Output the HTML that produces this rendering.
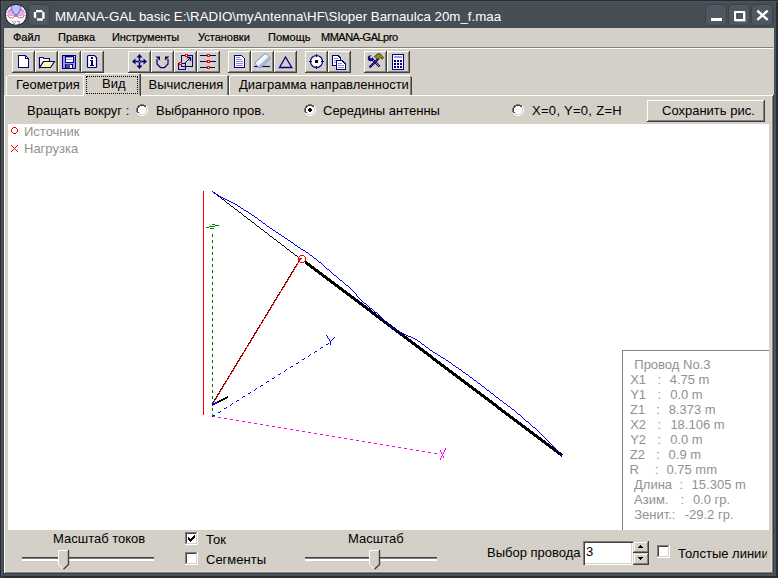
<!DOCTYPE html>
<html><head><meta charset="utf-8">
<style>
*{margin:0;padding:0;box-sizing:border-box}
html,body{width:778px;height:578px;overflow:hidden;background:#464e56}
body{position:relative;font-family:"Liberation Sans",sans-serif;font-size:13px;color:#000}
.a{position:absolute}
.t{position:absolute;white-space:pre;line-height:13px;font-size:13px}
.m{position:absolute;white-space:pre;line-height:11px;font-size:11px;top:32px;-webkit-text-stroke:0.2px #000}
.btn{position:absolute;width:23px;height:22px;background:#d4d0c8;box-shadow:inset -1px -1px #404040,inset 1px 1px #fff,inset -2px -2px #808080}
.btn svg{position:absolute;left:0;top:0}
.tb{position:absolute;width:22px;height:22px;border-radius:4px;background:#4f5860;border:1px solid #3a4147}
.radio{position:absolute;width:12px;height:12px}
.cb{position:absolute;width:13px;height:13px;background:#fff;box-shadow:inset 1px 1px #808080,inset 2px 2px #404040,inset -1px -1px #fff,inset -2px -2px #d4d0c8}
.it{position:absolute;white-space:pre;line-height:13px;font-size:13px;color:#919191}
</style></head><body>
<!-- frame -->
<div class="a" style="left:0;top:0;width:778px;height:1px;background:#262b30"></div>
<div class="a" style="left:0;top:1px;width:778px;height:1px;background:#4c545c"></div>
<div class="a" style="left:0;top:0;width:1px;height:578px;background:#262b30"></div>
<div class="a" style="left:1px;top:2px;width:2px;height:576px;background:#4b545c"></div>
<div class="a" style="left:3px;top:28px;width:1px;height:550px;background:#3a4147"></div>

<!-- title bar -->
<svg class="a" style="left:4px;top:2px" width="26" height="26" viewBox="0 0 26 26">
  <circle cx="12" cy="12.8" r="10.6" fill="#fff"/>
  <path d="M3.4 13.4 Q3.6 7.2 8.2 6.6 Q10.6 10.2 12 13.2 Z" fill="#f4a4f0"/>
  <path d="M20.6 13.4 Q20.4 7.2 15.8 6.6 Q13.4 10.2 12 13.2 Z" fill="#f4a4f0"/>
  <path d="M3.6 10.5 Q5 7.2 8.2 6.6 M20.4 10.5 Q19 7.2 15.8 6.6" fill="none" stroke="#d84868" stroke-width="0.7"/>
  <path d="M7 3.6 Q12 0.8 17 3.6 Q17.6 8.6 12 13.4 Q6.4 8.6 7 3.6 Z" fill="#b8b8ff" stroke="#4848b8" stroke-width="0.8"/>
  <line x1="12" y1="2.5" x2="12" y2="13" stroke="#d8d8f0" stroke-width="0.6"/>
  <path d="M3.6 13.6 Q5.4 17 8.8 15.8 L12 13.4 L15.2 15.8 Q18.6 17 20.4 13.6" fill="none" stroke="#d83850" stroke-width="0.9"/>
  <line x1="1" y1="13.4" x2="23" y2="13.4" stroke="#a8a8a8" stroke-width="0.7"/>
  <path d="M5 17.8 Q12 21.4 19 17.8 M8 15.5 Q12 23 16 15.5" fill="none" stroke="#dcdcdc" stroke-width="0.6"/>
  <circle cx="12" cy="13.4" r="1.3" fill="#7070d0"/>
  <text x="12.2" y="22.6" font-family="Liberation Sans" font-size="5.8" fill="#5050a8" text-anchor="middle">V.3</text>
  <circle cx="12" cy="12.8" r="13" fill="none" stroke="#464e56" stroke-width="4.4"/>
  <circle cx="12" cy="12.8" r="10.6" fill="none" stroke="#1e1e1e" stroke-width="1"/>
</svg>
<div class="tb" style="left:28px;top:4px"></div>
<svg class="a" style="left:29px;top:5px" width="20" height="20" viewBox="0 0 20 20">
  <path fill="#fff" d="M7 5 H13 L13.8 7.3 H7 Z M13.2 6.6 L15.6 7.3 V13.8 H13.2 Z M7.8 13.3 H13.8 V15.7 H8.2 Z M4.8 7 H7.2 V13 L5.6 13 L4.8 12.2 Z"/>
</svg>
<div class="a" style="left:55px;top:10px;white-space:pre;font-size:13.33px;line-height:14px;color:#fff">MMANA-GAL basic E:\RADIO\myAntenna\HF\Sloper Barnaulca 20m_f.maa</div>
<div class="tb" style="left:705px;top:4px"></div>
<div class="tb" style="left:728px;top:4px"></div>
<div class="tb" style="left:751px;top:4px"></div>
<div class="a" style="left:711px;top:18px;width:11px;height:3px;background:#fff"></div>
<div class="a" style="left:734px;top:11px;width:11px;height:10px;border:2px solid #fff;border-top-width:2px;box-shadow:1px 1px 0 rgba(255,255,255,0.35)"></div>
<svg class="a" style="left:752px;top:5px" width="20" height="20" viewBox="0 0 20 20">
  <path d="M5.3 5.6 L15.7 14.9 M15.7 5.6 L5.3 14.9" stroke="#fff" stroke-width="2.5"/>
</svg>

<!-- client area -->
<div class="a" style="left:4px;top:28px;width:770px;height:545px;background:#d4d0c8"></div>
<div class="a" style="left:771px;top:96px;width:1px;height:476px;background:#dedad3"></div>
<div class="a" style="left:5px;top:571px;width:767px;height:1px;background:#dedad3"></div>
<div class="a" style="left:772px;top:96px;width:1px;height:477px;background:#808080"></div>
<div class="a" style="left:5px;top:572px;width:768px;height:1px;background:#808080"></div>
<div class="a" style="left:773px;top:95px;width:1px;height:479px;background:#404040"></div>
<div class="a" style="left:4px;top:573px;width:770px;height:1px;background:#404040"></div>
<div class="a" style="left:776px;top:2px;width:2px;height:576px;background:#2a2f33"></div>
<div class="a" style="left:2px;top:576px;width:776px;height:2px;background:#2a2f33"></div>
<div class="a" style="left:774px;top:28px;width:2px;height:548px;background:#4a535b"></div>
<div class="a" style="left:4px;top:574px;width:772px;height:2px;background:#4a535b"></div>

<!-- menu -->
<div class="m" style="left:13px;top:32px">Файл</div>
<div class="m" style="left:58px;top:32px">Правка</div>
<div class="m" style="left:112px;top:32px;letter-spacing:-0.15px">Инструменты</div>
<div class="m" style="left:198px;top:32px">Установки</div>
<div class="m" style="left:268px;top:32px">Помощь</div>
<div class="m" style="left:321px;top:32px;letter-spacing:-0.5px">MMANA-GALpro</div>
<div class="a" style="left:4px;top:47px;width:769px;height:1px;background:#808080"></div>
<div class="a" style="left:4px;top:48px;width:769px;height:1px;background:#fff"></div>

<!-- TOOLBAR -->
<div class="btn" style="left:12px;top:51px"><svg width="23" height="22" shape-rendering="crispEdges">
 <path d="M6.5 4.5 H13.5 L16.5 7.5 V16.5 H6.5 Z" fill="#fff" stroke="#000080"/>
 <path d="M13.5 4.5 V7.5 H16.5" fill="none" stroke="#000080"/>
</svg></div>
<div class="btn" style="left:35px;top:51px"><svg width="23" height="22">
 <path d="M4.5 6.5 V16.5 H15.5 L19.5 10.5 H8.5 L4.5 16.5" fill="#ffff99" stroke="#000080" stroke-width="1.1"/>
 <path d="M4.5 6.5 H8 L9 7.5 H14.5 V10.5 H8.5 L4.5 16.5 Z" fill="#ffffcc" stroke="#000080" stroke-width="1.1"/>
</svg></div>
<div class="btn" style="left:58px;top:51px"><svg width="23" height="22" shape-rendering="crispEdges">
 <rect x="4.5" y="4.5" width="13" height="13" fill="#9a9aee" stroke="#000080"/>
 <rect x="7" y="5" width="8" height="6" fill="#fff" stroke="#000080" stroke-width="1"/>
 <rect x="8" y="6" width="6" height="1" fill="#9a9aee"/>
 <rect x="8" y="8" width="6" height="1" fill="#9a9aee"/>
 <rect x="7" y="13" width="8" height="5" fill="#000080"/>
 <rect x="8" y="13" width="5" height="4" fill="#4040b0"/>
 <rect x="12" y="14" width="2" height="3" fill="#ffffcc"/>
 <rect x="16" y="5" width="1" height="1" fill="#fff"/>
</svg></div>
<div class="btn" style="left:81px;top:51px"><svg width="23" height="22">
 <path d="M6.5 5.5 Q6.5 4.5 7.5 4.5 H13.5 L15.5 6.5 V16 Q15.5 16.5 14.5 16.5 H7.5 Q6.5 16.5 6.5 15.5 Z" fill="#fff" stroke="#000080" stroke-width="1.2"/>
 <g fill="#000080" shape-rendering="crispEdges"><rect x="10" y="6" width="2" height="2"/><rect x="9" y="9" width="3" height="1"/><rect x="10" y="9" width="2" height="5"/><rect x="9" y="14" width="4" height="1"/></g>
</svg></div>

<div class="btn" style="left:128px;top:51px"><svg width="23" height="22">
 <path d="M11.5 6 V15 M6.5 10.5 H16.5" stroke="#000080" stroke-width="1.5"/>
 <path d="M11.5 3 L8.5 6.5 H14.5 Z M11.5 18 L8.5 14.5 H14.5 Z M4 10.5 L7.5 7.5 V13.5 Z M19 10.5 L15.5 7.5 V13.5 Z" fill="#000080"/>
 <rect x="11" y="10" width="1" height="1" fill="#b0b0c8"/>
</svg></div>
<div class="btn" style="left:151px;top:51px"><svg width="23" height="22">
 <path d="M6 8 V13 L9.5 16.5 H13.5 L17 13 V8" fill="none" stroke="#000080" stroke-width="1.25"/>
 <path d="M4.5 5.5 H9 V9.5 Z M18.5 5.5 H14 V9.5 Z" fill="#000080"/>
</svg></div>
<div class="btn" style="left:174px;top:51px"><svg width="23" height="22" shape-rendering="crispEdges">
 <rect x="7.5" y="4.5" width="11" height="11" fill="none" stroke="#000080"/>
 <rect x="4.5" y="12.5" width="7" height="6" fill="none" stroke="#000080"/>
 <path d="M10 13 L16 7" stroke="#000080" stroke-width="1" shape-rendering="auto"/>
 <path d="M16.5 6.5 H13 M16.5 6.5 V10" stroke="#000080" stroke-width="1.4" shape-rendering="auto"/>
 <rect x="11" y="3" width="3" height="3" fill="#f00"/><rect x="12" y="4" width="1" height="1" fill="#fff"/>
 <rect x="5" y="11" width="3" height="3" fill="#f00"/><rect x="6" y="12" width="1" height="1" fill="#fff"/>
</svg></div>
<div class="btn" style="left:197px;top:51px"><svg width="23" height="22" shape-rendering="crispEdges">
 <path d="M3 4.5 H19 M3 10.5 H19 M3 16.5 H18" stroke="#000080" stroke-width="1"/>
 <rect x="10" y="3" width="3" height="3" fill="#f00"/><rect x="11" y="4" width="1" height="1" fill="#fff"/>
 <rect x="10" y="9" width="3" height="3" fill="#f00"/><rect x="11" y="10" width="1" height="1" fill="#fff"/>
 <rect x="10" y="15" width="3" height="3" fill="#f00"/><rect x="11" y="16" width="1" height="1" fill="#fff"/>
</svg></div>

<div class="btn" style="left:228px;top:51px"><svg width="23" height="22" shape-rendering="crispEdges">
 <path d="M6.5 4.5 H13.5 L16.5 7.5 V16.5 H6.5 Z" fill="#fff" stroke="#000080" stroke-width="1.2"/>
 <path d="M8 6.5 H12 M8 8.5 H14 M8 10.5 H15 M8 12.5 H15 M8 14.5 H15" stroke="#8a8ad0"/>
</svg></div>
<div class="btn" style="left:251px;top:51px"><svg width="23" height="22">
 <path d="M3 15.5 H19" stroke="#000080" stroke-width="1.2"/>
 <g transform="rotate(-42 11.5 9.5)">
  <rect x="4" y="6" width="15" height="7.5" rx="2.2" fill="#f2f5fb" stroke="#7088c0" stroke-width="0.9"/>
  <rect x="4.6" y="10.8" width="13.8" height="2.4" rx="1" fill="#a8b8d8"/>
 </g>
</svg></div>
<div class="btn" style="left:274px;top:51px"><svg width="23" height="22">
 <path d="M11.5 6 L5.5 16.5 H17.8 Z" fill="none" stroke="#000080" stroke-width="1.3"/>
</svg></div>

<div class="btn" style="left:305px;top:51px"><svg width="23" height="22">
 <circle cx="11.5" cy="10.5" r="6" fill="#fff" stroke="#000080" stroke-width="1.2"/>
 <path d="M11.5 3 V6 M11.5 15 V18 M4 10.5 H7 M16 10.5 H19" stroke="#000080" stroke-width="1.2"/>
 <rect x="10" y="9" width="3" height="3" fill="#000"/>
</svg></div>
<div class="btn" style="left:328px;top:51px"><svg width="23" height="22" shape-rendering="crispEdges">
 <path d="M4.5 4.5 H10 L12.5 7 V14.5 H4.5 Z" fill="#fff" stroke="#000080" stroke-width="1.2"/>
 <path d="M6 7.5 H10 M6 9.5 H10 M6 11.5 H8" stroke="#8a8ad0"/>
 <path d="M8.5 9.5 H14 L17.5 13 V18.5 H8.5 Z" fill="#fff" stroke="#000080" stroke-width="1.2"/>
 <path d="M10 12.5 H14 M10 14.5 H16 M10 16.5 H16" stroke="#8a8ad0"/>
</svg></div>

<div class="btn" style="left:364px;top:51px"><svg width="23" height="22">
 <path d="M8 8 L15.5 15.5" stroke="#000080" stroke-width="2.4"/>
 <path d="M8.5 8.5 L15 15" stroke="#b8c0e8" stroke-width="0.8"/>
 <path d="M3.8 6.5 Q3.5 10 6.8 10.2 Q9.8 9.6 9 6 L7.2 7.8 L5.7 6.3 L7.5 4.3 Q4.3 4 3.8 6.5 Z" fill="#000080"/>
 <path d="M5.5 16.5 L14.5 7.5" stroke="#000080" stroke-width="2.4"/>
 <path d="M5.8 16.2 L14.2 7.8" stroke="#a02828" stroke-width="0.9"/>
 <path d="M10.5 5.5 L13.5 2.8 L16.2 2.8 L19.6 6.4 L18.4 8.2 L16 6.6 L14 8.6 Z" fill="#8a8a20" stroke="#202010" stroke-width="0.7"/>
</svg></div>
<div class="btn" style="left:387px;top:51px"><svg width="23" height="22" shape-rendering="crispEdges">
 <rect x="5.5" y="3.5" width="11" height="15" rx="1.5" fill="#fff" stroke="#000080" stroke-width="1.2"/>
 <rect x="7" y="5" width="8" height="2" fill="#9a9ae0"/>
 <path d="M7 9h2v2h-2zM10 9h2v2h-2zM13 9h2v2h-2zM7 12h2v2h-2zM10 12h2v2h-2zM13 12h2v2h-2zM7 15h2v2h-2zM10 15h2v2h-2zM13 15h2v2h-2z" fill="#000080"/>
</svg></div>

<!-- TABS -->
<div class="a" style="left:4px;top:95px;width:769px;height:1px;background:#fff"></div>
<div class="a" style="left:4px;top:95px;width:1px;height:478px;background:#fff"></div>
<!-- tab1 -->
<div class="a" style="left:6px;top:77px;width:1px;height:18px;background:#fff"></div>
<div class="a" style="left:7px;top:76px;width:1px;height:1px;background:#fff"></div>
<div class="a" style="left:8px;top:75px;width:76px;height:1px;background:#fff"></div>
<div class="t" style="left:16px;top:78px">Геометрия</div>
<!-- tab3 -->
<div class="a" style="left:141px;top:75px;width:86px;height:1px;background:#fff"></div>
<div class="a" style="left:227px;top:76px;width:1px;height:19px;background:#808080"></div>
<div class="a" style="left:228px;top:76px;width:1px;height:19px;background:#404040"></div>
<div class="t" style="left:148.5px;top:78px">Вычисления</div>
<!-- tab4 -->
<div class="a" style="left:229px;top:77px;width:1px;height:18px;background:#fff"></div>
<div class="a" style="left:230px;top:76px;width:1px;height:1px;background:#fff"></div>
<div class="a" style="left:231px;top:75px;width:179px;height:1px;background:#fff"></div>
<div class="a" style="left:410px;top:76px;width:1px;height:19px;background:#808080"></div>
<div class="a" style="left:411px;top:77px;width:1px;height:18px;background:#404040"></div>
<div class="t" style="left:239px;top:78px">Диаграмма направленности</div>
<!-- tab2 selected -->
<div class="a" style="left:84px;top:74px;width:56px;height:22px;background:#d4d0c8"></div>
<div class="a" style="left:83px;top:75px;width:1px;height:21px;background:#fff"></div>
<div class="a" style="left:84px;top:74px;width:1px;height:1px;background:#fff"></div>
<div class="a" style="left:85px;top:73px;width:54px;height:1px;background:#fff"></div>
<div class="a" style="left:139px;top:74px;width:1px;height:21px;background:#808080"></div>
<div class="a" style="left:140px;top:74px;width:1px;height:22px;background:#404040"></div>
<div class="a" style="left:86px;top:76px;width:52px;height:18px;outline:1px dotted #000;outline-offset:-1px"></div>
<div class="t" style="left:102px;top:77px">Вид</div>


<!-- PAGE -->
<div class="t" style="left:27px;top:104px">Вращать вокруг :</div>
<svg class="radio" style="left:136px;top:104px" width="12" height="12"><path fill="#808080" d="M4 0h1v1h-1zM5 0h1v1h-1zM6 0h1v1h-1zM7 0h1v1h-1zM2 1h1v1h-1zM3 1h1v1h-1zM8 1h1v1h-1zM9 1h1v1h-1zM1 2h1v1h-1zM1 3h1v1h-1zM0 4h1v1h-1zM0 5h1v1h-1zM0 6h1v1h-1zM0 7h1v1h-1zM1 8h1v1h-1z"/><path fill="#404040" d="M4 1h1v1h-1zM5 1h1v1h-1zM6 1h1v1h-1zM7 1h1v1h-1zM2 2h1v1h-1zM3 2h1v1h-1zM8 2h1v1h-1zM9 2h1v1h-1zM2 3h1v1h-1zM1 4h1v1h-1zM1 5h1v1h-1zM1 6h1v1h-1zM1 7h1v1h-1zM2 8h1v1h-1z"/><path fill="#ffffff" d="M4 2h1v1h-1zM5 2h1v1h-1zM6 2h1v1h-1zM7 2h1v1h-1zM10 2h1v1h-1zM3 3h1v1h-1zM4 3h1v1h-1zM5 3h1v1h-1zM6 3h1v1h-1zM7 3h1v1h-1zM8 3h1v1h-1zM10 3h1v1h-1zM2 4h1v1h-1zM3 4h1v1h-1zM4 4h1v1h-1zM5 4h1v1h-1zM6 4h1v1h-1zM7 4h1v1h-1zM8 4h1v1h-1zM9 4h1v1h-1zM11 4h1v1h-1zM2 5h1v1h-1zM3 5h1v1h-1zM4 5h1v1h-1zM5 5h1v1h-1zM6 5h1v1h-1zM7 5h1v1h-1zM8 5h1v1h-1zM9 5h1v1h-1zM11 5h1v1h-1zM2 6h1v1h-1zM3 6h1v1h-1zM4 6h1v1h-1zM5 6h1v1h-1zM6 6h1v1h-1zM7 6h1v1h-1zM8 6h1v1h-1zM9 6h1v1h-1zM11 6h1v1h-1zM2 7h1v1h-1zM3 7h1v1h-1zM4 7h1v1h-1zM5 7h1v1h-1zM6 7h1v1h-1zM7 7h1v1h-1zM8 7h1v1h-1zM9 7h1v1h-1zM11 7h1v1h-1zM3 8h1v1h-1zM4 8h1v1h-1zM5 8h1v1h-1zM6 8h1v1h-1zM7 8h1v1h-1zM8 8h1v1h-1zM10 8h1v1h-1zM1 9h1v1h-1zM4 9h1v1h-1zM5 9h1v1h-1zM6 9h1v1h-1zM7 9h1v1h-1zM10 9h1v1h-1zM2 10h1v1h-1zM3 10h1v1h-1zM8 10h1v1h-1zM9 10h1v1h-1zM4 11h1v1h-1zM5 11h1v1h-1zM6 11h1v1h-1zM7 11h1v1h-1z"/><path fill="#d4d0c8" d="M9 3h1v1h-1zM10 4h1v1h-1zM10 5h1v1h-1zM10 6h1v1h-1zM10 7h1v1h-1zM9 8h1v1h-1zM2 9h1v1h-1zM3 9h1v1h-1zM8 9h1v1h-1zM9 9h1v1h-1zM4 10h1v1h-1zM5 10h1v1h-1zM6 10h1v1h-1zM7 10h1v1h-1z"/></svg>
<div class="t" style="left:156px;top:104px">Выбранного пров.</div>
<svg class="radio" style="left:304px;top:104px" width="12" height="12"><path fill="#808080" d="M4 0h1v1h-1zM5 0h1v1h-1zM6 0h1v1h-1zM7 0h1v1h-1zM2 1h1v1h-1zM3 1h1v1h-1zM8 1h1v1h-1zM9 1h1v1h-1zM1 2h1v1h-1zM1 3h1v1h-1zM0 4h1v1h-1zM0 5h1v1h-1zM0 6h1v1h-1zM0 7h1v1h-1zM1 8h1v1h-1z"/><path fill="#404040" d="M4 1h1v1h-1zM5 1h1v1h-1zM6 1h1v1h-1zM7 1h1v1h-1zM2 2h1v1h-1zM3 2h1v1h-1zM8 2h1v1h-1zM9 2h1v1h-1zM2 3h1v1h-1zM1 4h1v1h-1zM1 5h1v1h-1zM1 6h1v1h-1zM1 7h1v1h-1zM2 8h1v1h-1z"/><path fill="#ffffff" d="M4 2h1v1h-1zM5 2h1v1h-1zM6 2h1v1h-1zM7 2h1v1h-1zM10 2h1v1h-1zM3 3h1v1h-1zM4 3h1v1h-1zM5 3h1v1h-1zM6 3h1v1h-1zM7 3h1v1h-1zM8 3h1v1h-1zM10 3h1v1h-1zM2 4h1v1h-1zM3 4h1v1h-1zM4 4h1v1h-1zM7 4h1v1h-1zM8 4h1v1h-1zM9 4h1v1h-1zM11 4h1v1h-1zM2 5h1v1h-1zM3 5h1v1h-1zM8 5h1v1h-1zM9 5h1v1h-1zM11 5h1v1h-1zM2 6h1v1h-1zM3 6h1v1h-1zM8 6h1v1h-1zM9 6h1v1h-1zM11 6h1v1h-1zM2 7h1v1h-1zM3 7h1v1h-1zM4 7h1v1h-1zM7 7h1v1h-1zM8 7h1v1h-1zM9 7h1v1h-1zM11 7h1v1h-1zM3 8h1v1h-1zM4 8h1v1h-1zM5 8h1v1h-1zM6 8h1v1h-1zM7 8h1v1h-1zM8 8h1v1h-1zM10 8h1v1h-1zM1 9h1v1h-1zM4 9h1v1h-1zM5 9h1v1h-1zM6 9h1v1h-1zM7 9h1v1h-1zM10 9h1v1h-1zM2 10h1v1h-1zM3 10h1v1h-1zM8 10h1v1h-1zM9 10h1v1h-1zM4 11h1v1h-1zM5 11h1v1h-1zM6 11h1v1h-1zM7 11h1v1h-1z"/><path fill="#d4d0c8" d="M9 3h1v1h-1zM10 4h1v1h-1zM10 5h1v1h-1zM10 6h1v1h-1zM10 7h1v1h-1zM9 8h1v1h-1zM2 9h1v1h-1zM3 9h1v1h-1zM8 9h1v1h-1zM9 9h1v1h-1zM4 10h1v1h-1zM5 10h1v1h-1zM6 10h1v1h-1zM7 10h1v1h-1z"/><path fill="#000000" d="M5 4h1v1h-1zM6 4h1v1h-1zM4 5h1v1h-1zM5 5h1v1h-1zM6 5h1v1h-1zM7 5h1v1h-1zM4 6h1v1h-1zM5 6h1v1h-1zM6 6h1v1h-1zM7 6h1v1h-1zM5 7h1v1h-1zM6 7h1v1h-1z"/></svg>
<div class="t" style="left:323px;top:104px">Середины антенны</div>
<svg class="radio" style="left:512px;top:104px" width="12" height="12"><path fill="#808080" d="M4 0h1v1h-1zM5 0h1v1h-1zM6 0h1v1h-1zM7 0h1v1h-1zM2 1h1v1h-1zM3 1h1v1h-1zM8 1h1v1h-1zM9 1h1v1h-1zM1 2h1v1h-1zM1 3h1v1h-1zM0 4h1v1h-1zM0 5h1v1h-1zM0 6h1v1h-1zM0 7h1v1h-1zM1 8h1v1h-1z"/><path fill="#404040" d="M4 1h1v1h-1zM5 1h1v1h-1zM6 1h1v1h-1zM7 1h1v1h-1zM2 2h1v1h-1zM3 2h1v1h-1zM8 2h1v1h-1zM9 2h1v1h-1zM2 3h1v1h-1zM1 4h1v1h-1zM1 5h1v1h-1zM1 6h1v1h-1zM1 7h1v1h-1zM2 8h1v1h-1z"/><path fill="#ffffff" d="M4 2h1v1h-1zM5 2h1v1h-1zM6 2h1v1h-1zM7 2h1v1h-1zM10 2h1v1h-1zM3 3h1v1h-1zM4 3h1v1h-1zM5 3h1v1h-1zM6 3h1v1h-1zM7 3h1v1h-1zM8 3h1v1h-1zM10 3h1v1h-1zM2 4h1v1h-1zM3 4h1v1h-1zM4 4h1v1h-1zM5 4h1v1h-1zM6 4h1v1h-1zM7 4h1v1h-1zM8 4h1v1h-1zM9 4h1v1h-1zM11 4h1v1h-1zM2 5h1v1h-1zM3 5h1v1h-1zM4 5h1v1h-1zM5 5h1v1h-1zM6 5h1v1h-1zM7 5h1v1h-1zM8 5h1v1h-1zM9 5h1v1h-1zM11 5h1v1h-1zM2 6h1v1h-1zM3 6h1v1h-1zM4 6h1v1h-1zM5 6h1v1h-1zM6 6h1v1h-1zM7 6h1v1h-1zM8 6h1v1h-1zM9 6h1v1h-1zM11 6h1v1h-1zM2 7h1v1h-1zM3 7h1v1h-1zM4 7h1v1h-1zM5 7h1v1h-1zM6 7h1v1h-1zM7 7h1v1h-1zM8 7h1v1h-1zM9 7h1v1h-1zM11 7h1v1h-1zM3 8h1v1h-1zM4 8h1v1h-1zM5 8h1v1h-1zM6 8h1v1h-1zM7 8h1v1h-1zM8 8h1v1h-1zM10 8h1v1h-1zM1 9h1v1h-1zM4 9h1v1h-1zM5 9h1v1h-1zM6 9h1v1h-1zM7 9h1v1h-1zM10 9h1v1h-1zM2 10h1v1h-1zM3 10h1v1h-1zM8 10h1v1h-1zM9 10h1v1h-1zM4 11h1v1h-1zM5 11h1v1h-1zM6 11h1v1h-1zM7 11h1v1h-1z"/><path fill="#d4d0c8" d="M9 3h1v1h-1zM10 4h1v1h-1zM10 5h1v1h-1zM10 6h1v1h-1zM10 7h1v1h-1zM9 8h1v1h-1zM2 9h1v1h-1zM3 9h1v1h-1zM8 9h1v1h-1zM9 9h1v1h-1zM4 10h1v1h-1zM5 10h1v1h-1zM6 10h1v1h-1zM7 10h1v1h-1z"/></svg>
<div class="t" style="left:532px;top:104px;letter-spacing:0.3px">X=0, Y=0, Z=H</div>
<div class="a" style="left:647px;top:100px;width:118px;height:22px;background:#d4d0c8;box-shadow:inset -1px -1px #404040,inset 1px 1px #fff,inset -2px -2px #808080"></div>
<div class="t" style="left:662px;top:104px">Сохранить рис.</div>

<!-- drawing area -->
<div class="a" style="left:8px;top:124px;width:761px;height:406px;background:#fff;overflow:hidden">
<svg width="761" height="406" style="position:absolute;left:0;top:0" viewBox="8 124 761 406">
<path fill="#ff0000" d="M203 191h1v1h-1zM203 192h1v1h-1zM203 193h1v1h-1zM203 194h1v1h-1zM203 195h1v1h-1zM203 196h1v1h-1zM203 197h1v1h-1zM203 198h1v1h-1zM203 199h1v1h-1zM203 200h1v1h-1zM203 201h1v1h-1zM203 202h1v1h-1zM203 203h1v1h-1zM203 204h1v1h-1zM203 205h1v1h-1zM203 206h1v1h-1zM203 207h1v1h-1zM203 208h1v1h-1zM203 209h1v1h-1zM203 210h1v1h-1zM203 211h1v1h-1zM203 212h1v1h-1zM203 213h1v1h-1zM203 214h1v1h-1zM203 215h1v1h-1zM203 216h1v1h-1zM203 217h1v1h-1zM203 218h1v1h-1zM203 219h1v1h-1zM203 220h1v1h-1zM203 221h1v1h-1zM203 222h1v1h-1zM203 223h1v1h-1zM203 224h1v1h-1zM203 225h1v1h-1zM203 226h1v1h-1zM203 227h1v1h-1zM203 228h1v1h-1zM203 229h1v1h-1zM203 230h1v1h-1zM203 231h1v1h-1zM203 232h1v1h-1zM203 233h1v1h-1zM203 234h1v1h-1zM203 235h1v1h-1zM203 236h1v1h-1zM203 237h1v1h-1zM203 238h1v1h-1zM203 239h1v1h-1zM203 240h1v1h-1zM203 241h1v1h-1zM203 242h1v1h-1zM203 243h1v1h-1zM203 244h1v1h-1zM203 245h1v1h-1zM203 246h1v1h-1zM203 247h1v1h-1zM203 248h1v1h-1zM203 249h1v1h-1zM203 250h1v1h-1zM203 251h1v1h-1zM203 252h1v1h-1zM203 253h1v1h-1zM203 254h1v1h-1zM203 255h1v1h-1zM203 256h1v1h-1zM203 257h1v1h-1zM203 258h1v1h-1zM203 259h1v1h-1zM203 260h1v1h-1zM203 261h1v1h-1zM203 262h1v1h-1zM203 263h1v1h-1zM203 264h1v1h-1zM203 265h1v1h-1zM203 266h1v1h-1zM203 267h1v1h-1zM203 268h1v1h-1zM203 269h1v1h-1zM203 270h1v1h-1zM203 271h1v1h-1zM203 272h1v1h-1zM203 273h1v1h-1zM203 274h1v1h-1zM203 275h1v1h-1zM203 276h1v1h-1zM203 277h1v1h-1zM203 278h1v1h-1zM203 279h1v1h-1zM203 280h1v1h-1zM203 281h1v1h-1zM203 282h1v1h-1zM203 283h1v1h-1zM203 284h1v1h-1zM203 285h1v1h-1zM203 286h1v1h-1zM203 287h1v1h-1zM203 288h1v1h-1zM203 289h1v1h-1zM203 290h1v1h-1zM203 291h1v1h-1zM203 292h1v1h-1zM203 293h1v1h-1zM203 294h1v1h-1zM203 295h1v1h-1zM203 296h1v1h-1zM203 297h1v1h-1zM203 298h1v1h-1zM203 299h1v1h-1zM203 300h1v1h-1zM203 301h1v1h-1zM203 302h1v1h-1zM203 303h1v1h-1zM203 304h1v1h-1zM203 305h1v1h-1zM203 306h1v1h-1zM203 307h1v1h-1zM203 308h1v1h-1zM203 309h1v1h-1zM203 310h1v1h-1zM203 311h1v1h-1zM203 312h1v1h-1zM203 313h1v1h-1zM203 314h1v1h-1zM203 315h1v1h-1zM203 316h1v1h-1zM203 317h1v1h-1zM203 318h1v1h-1zM203 319h1v1h-1zM203 320h1v1h-1zM203 321h1v1h-1zM203 322h1v1h-1zM203 323h1v1h-1zM203 324h1v1h-1zM203 325h1v1h-1zM203 326h1v1h-1zM203 327h1v1h-1zM203 328h1v1h-1zM203 329h1v1h-1zM203 330h1v1h-1zM203 331h1v1h-1zM203 332h1v1h-1zM203 333h1v1h-1zM203 334h1v1h-1zM203 335h1v1h-1zM203 336h1v1h-1zM203 337h1v1h-1zM203 338h1v1h-1zM203 339h1v1h-1zM203 340h1v1h-1zM203 341h1v1h-1zM203 342h1v1h-1zM203 343h1v1h-1zM203 344h1v1h-1zM203 345h1v1h-1zM203 346h1v1h-1zM203 347h1v1h-1zM203 348h1v1h-1zM203 349h1v1h-1zM203 350h1v1h-1zM203 351h1v1h-1zM203 352h1v1h-1zM203 353h1v1h-1zM203 354h1v1h-1zM203 355h1v1h-1zM203 356h1v1h-1zM203 357h1v1h-1zM203 358h1v1h-1zM203 359h1v1h-1zM203 360h1v1h-1zM203 361h1v1h-1zM203 362h1v1h-1zM203 363h1v1h-1zM203 364h1v1h-1zM203 365h1v1h-1zM203 366h1v1h-1zM203 367h1v1h-1zM203 368h1v1h-1zM203 369h1v1h-1zM203 370h1v1h-1zM203 371h1v1h-1zM203 372h1v1h-1zM203 373h1v1h-1zM203 374h1v1h-1zM203 375h1v1h-1zM203 376h1v1h-1zM203 377h1v1h-1zM203 378h1v1h-1zM203 379h1v1h-1zM203 380h1v1h-1zM203 381h1v1h-1zM203 382h1v1h-1zM203 383h1v1h-1zM203 384h1v1h-1zM203 385h1v1h-1zM203 386h1v1h-1zM203 387h1v1h-1zM203 388h1v1h-1zM203 389h1v1h-1zM203 390h1v1h-1zM203 391h1v1h-1zM203 392h1v1h-1zM203 393h1v1h-1zM203 394h1v1h-1zM203 395h1v1h-1zM203 396h1v1h-1zM203 397h1v1h-1zM203 398h1v1h-1zM203 399h1v1h-1zM203 400h1v1h-1zM203 401h1v1h-1zM203 402h1v1h-1zM203 403h1v1h-1zM203 404h1v1h-1zM203 405h1v1h-1zM203 406h1v1h-1zM203 407h1v1h-1zM203 408h1v1h-1zM203 409h1v1h-1zM203 410h1v1h-1zM203 411h1v1h-1zM203 412h1v1h-1zM203 413h1v1h-1zM203 414h1v1h-1z"/>
<path fill="#008000" d="M212 234h1v1h-1zM212 235h1v1h-1zM212 236h1v1h-1zM212 240h1v1h-1zM212 241h1v1h-1zM212 242h1v1h-1zM212 246h1v1h-1zM212 247h1v1h-1zM212 248h1v1h-1zM212 252h1v1h-1zM212 253h1v1h-1zM212 254h1v1h-1zM212 258h1v1h-1zM212 259h1v1h-1zM212 260h1v1h-1zM212 264h1v1h-1zM212 265h1v1h-1zM212 266h1v1h-1zM212 270h1v1h-1zM212 271h1v1h-1zM212 272h1v1h-1zM212 276h1v1h-1zM212 277h1v1h-1zM212 278h1v1h-1zM212 282h1v1h-1zM212 283h1v1h-1zM212 284h1v1h-1zM212 288h1v1h-1zM212 289h1v1h-1zM212 290h1v1h-1zM212 294h1v1h-1zM212 295h1v1h-1zM212 296h1v1h-1zM212 300h1v1h-1zM212 301h1v1h-1zM212 302h1v1h-1zM212 306h1v1h-1zM212 307h1v1h-1zM212 308h1v1h-1zM212 312h1v1h-1zM212 313h1v1h-1zM212 314h1v1h-1zM212 318h1v1h-1zM212 319h1v1h-1zM212 320h1v1h-1zM212 324h1v1h-1zM212 325h1v1h-1zM212 326h1v1h-1zM212 330h1v1h-1zM212 331h1v1h-1zM212 332h1v1h-1zM212 336h1v1h-1zM212 337h1v1h-1zM212 338h1v1h-1zM212 342h1v1h-1zM212 343h1v1h-1zM212 344h1v1h-1zM212 348h1v1h-1zM212 349h1v1h-1zM212 350h1v1h-1zM212 354h1v1h-1zM212 355h1v1h-1zM212 356h1v1h-1zM212 360h1v1h-1zM212 361h1v1h-1zM212 362h1v1h-1zM212 366h1v1h-1zM212 367h1v1h-1zM212 368h1v1h-1zM212 372h1v1h-1zM212 373h1v1h-1zM212 374h1v1h-1zM212 378h1v1h-1zM212 379h1v1h-1zM212 380h1v1h-1zM212 384h1v1h-1zM212 385h1v1h-1zM212 386h1v1h-1zM212 390h1v1h-1zM212 391h1v1h-1zM212 392h1v1h-1zM212 396h1v1h-1zM212 397h1v1h-1zM212 398h1v1h-1zM212 402h1v1h-1zM212 403h1v1h-1zM212 404h1v1h-1zM212 408h1v1h-1zM212 409h1v1h-1zM212 410h1v1h-1zM212 414h1v1h-1zM212 415h1v1h-1zM212 416h1v1h-1z"/>
<path fill="#008000" d="M212 224h3v1h-3zM215 225h4v1h-4zM209 226h6v1h-6zM206 227h3v1h-3zM210 228h4v1h-4z"/>
<path fill="#ff00ff" d="M212 416h3v1h-3zM218 417h3v1h-3zM224 418h3v1h-3zM230 419h3v1h-3zM236 420h3v1h-3zM242 421h3v1h-3zM248 422h3v1h-3zM254 423h3v1h-3zM260 424h3v1h-3zM266 425h3v1h-3zM272 426h3v1h-3zM278 427h3v1h-3zM284 428h3v1h-3zM290 429h3v1h-3zM296 430h3v1h-3zM302 431h3v1h-3zM308 432h3v1h-3zM314 433h3v1h-3zM320 434h3v1h-3zM326 435h3v1h-3zM332 436h3v1h-3zM338 437h3v1h-3zM344 438h3v1h-3zM350 439h3v1h-3zM356 440h3v1h-3zM362 441h3v1h-3zM368 442h3v1h-3zM374 443h3v1h-3zM380 444h3v1h-3zM386 445h3v1h-3zM392 446h3v1h-3zM398 447h3v1h-3zM404 448h3v1h-3zM410 449h3v1h-3zM416 450h3v1h-3zM422 451h3v1h-3zM428 452h3v1h-3zM434 453h3v1h-3z"/>
<path fill="#ff00ff" d="M445 448h1v1h-1zM445 449h1v1h-1zM440 450h1v1h-1zM444 450h1v1h-1zM440 451h1v1h-1zM444 451h1v1h-1zM441 452h1v1h-1zM443 452h1v1h-1zM441 453h1v1h-1zM443 453h1v1h-1zM442 454h1v1h-1zM442 455h1v1h-1zM441 456h1v1h-1zM443 456h1v1h-1zM441 457h1v1h-1zM443 457h1v1h-1zM440 458h1v1h-1zM440 459h1v1h-1z"/>
<path fill="#0000ff" d="M328 343h1v1h-1zM326 344h2v1h-2zM321 347h2v1h-2zM320 348h1v1h-1zM315 351h2v1h-2zM314 352h1v1h-1zM310 354h1v1h-1zM309 355h1v1h-1zM308 356h1v1h-1zM304 358h1v1h-1zM302 359h2v1h-2zM298 362h1v1h-1zM296 363h2v1h-2zM291 366h2v1h-2zM290 367h1v1h-1zM286 369h1v1h-1zM285 370h1v1h-1zM284 371h1v1h-1zM280 373h1v1h-1zM278 374h2v1h-2zM274 377h1v1h-1zM272 378h2v1h-2zM267 381h2v1h-2zM266 382h1v1h-1zM261 385h2v1h-2zM260 386h1v1h-1zM256 388h1v1h-1zM255 389h1v1h-1zM254 390h1v1h-1zM250 392h1v1h-1zM248 393h2v1h-2zM243 396h2v1h-2zM242 397h1v1h-1zM237 400h2v1h-2zM236 401h1v1h-1zM232 403h1v1h-1zM231 404h1v1h-1zM230 405h1v1h-1zM226 407h1v1h-1zM224 408h2v1h-2zM220 411h1v1h-1zM218 412h2v1h-2zM213 415h2v1h-2zM212 416h1v1h-1z"/>
<path fill="#0000ff" d="M326 335h1v1h-1zM327 336h1v1h-1zM327 337h1v1h-1zM334 337h1v1h-1zM328 338h1v1h-1zM333 338h1v1h-1zM329 339h1v1h-1zM332 339h1v1h-1zM329 340h1v1h-1zM331 340h1v1h-1zM330 341h1v1h-1zM330 342h1v1h-1zM330 343h1v1h-1zM330 344h1v1h-1z"/>
<path fill="#000000" d="M212 191h1v1h-1zM213 192h1v1h-1zM214 193h2v1h-2zM216 194h1v1h-1zM217 195h1v1h-1zM218 196h2v1h-2zM220 197h1v1h-1zM221 198h1v1h-1zM222 199h2v1h-2zM224 200h1v1h-1zM225 201h1v1h-1zM226 202h1v1h-1zM227 203h2v1h-2zM229 204h1v1h-1zM230 205h1v1h-1zM231 206h2v1h-2zM233 207h1v1h-1zM234 208h1v1h-1zM235 209h2v1h-2zM237 210h1v1h-1zM238 211h1v1h-1zM239 212h2v1h-2zM241 213h1v1h-1zM242 214h1v1h-1zM243 215h1v1h-1zM244 216h2v1h-2zM246 217h1v1h-1zM247 218h1v1h-1zM248 219h2v1h-2zM250 220h1v1h-1zM251 221h1v1h-1zM252 222h2v1h-2zM254 223h1v1h-1zM255 224h1v1h-1zM256 225h1v1h-1zM257 226h2v1h-2zM259 227h1v1h-1zM260 228h1v1h-1zM261 229h2v1h-2zM263 230h1v1h-1zM264 231h1v1h-1zM265 232h2v1h-2zM267 233h1v1h-1zM268 234h1v1h-1zM269 235h1v1h-1zM270 236h2v1h-2zM272 237h1v1h-1zM273 238h1v1h-1zM274 239h2v1h-2zM276 240h1v1h-1zM277 241h1v1h-1zM278 242h2v1h-2zM280 243h1v1h-1zM281 244h1v1h-1zM282 245h2v1h-2zM284 246h1v1h-1zM285 247h1v1h-1zM286 248h1v1h-1zM287 249h2v1h-2zM289 250h1v1h-1zM290 251h1v1h-1zM291 252h2v1h-2zM293 253h1v1h-1zM294 254h1v1h-1zM295 255h2v1h-2zM297 256h1v1h-1zM298 257h1v1h-1z"/>
<path fill="#000000" d="M227 396h1v1h-1zM225 397h3v1h-3zM223 398h4v1h-4zM221 399h4v1h-4zM219 400h4v1h-4zM217 401h4v1h-4zM215 402h4v1h-4zM213 403h4v1h-4zM212 404h1v1h-1z"/>
<path fill="#000000" d="M300 258h1v1h-1zM299 259h1v1h-1zM299 260h1v1h-1zM298 261h1v1h-1zM298 262h1v1h-1zM297 263h1v1h-1zM296 264h1v1h-1zM296 265h1v1h-1zM295 266h1v1h-1zM294 267h1v1h-1zM294 268h1v1h-1zM293 269h1v1h-1zM293 270h1v1h-1zM292 271h1v1h-1zM291 272h1v1h-1zM291 273h1v1h-1zM290 274h1v1h-1zM290 275h1v1h-1zM289 276h1v1h-1zM288 277h1v1h-1zM288 278h1v1h-1zM287 279h1v1h-1zM287 280h1v1h-1zM286 281h1v1h-1zM285 282h1v1h-1zM285 283h1v1h-1zM284 284h1v1h-1zM284 285h1v1h-1zM283 286h1v1h-1zM282 287h1v1h-1zM282 288h1v1h-1zM281 289h1v1h-1zM281 290h1v1h-1zM280 291h1v1h-1zM279 292h1v1h-1zM279 293h1v1h-1zM278 294h1v1h-1zM277 295h1v1h-1zM277 296h1v1h-1zM276 297h1v1h-1zM276 298h1v1h-1zM275 299h1v1h-1zM274 300h1v1h-1zM274 301h1v1h-1zM273 302h1v1h-1zM273 303h1v1h-1zM272 304h1v1h-1zM271 305h1v1h-1zM271 306h1v1h-1zM270 307h1v1h-1zM270 308h1v1h-1zM269 309h1v1h-1zM268 310h1v1h-1zM268 311h1v1h-1zM267 312h1v1h-1zM267 313h1v1h-1zM266 314h1v1h-1zM265 315h1v1h-1zM265 316h1v1h-1zM264 317h1v1h-1zM264 318h1v1h-1zM263 319h1v1h-1zM262 320h1v1h-1zM262 321h1v1h-1zM261 322h1v1h-1zM261 323h1v1h-1zM260 324h1v1h-1zM259 325h1v1h-1zM259 326h1v1h-1zM258 327h1v1h-1zM257 328h1v1h-1zM257 329h1v1h-1zM256 330h1v1h-1zM256 331h1v1h-1zM255 332h1v1h-1zM254 333h1v1h-1zM254 334h1v1h-1zM253 335h1v1h-1zM253 336h1v1h-1zM252 337h1v1h-1zM251 338h1v1h-1zM251 339h1v1h-1zM250 340h1v1h-1zM250 341h1v1h-1zM249 342h1v1h-1zM248 343h1v1h-1zM248 344h1v1h-1zM247 345h1v1h-1zM247 346h1v1h-1zM246 347h1v1h-1zM245 348h1v1h-1zM245 349h1v1h-1zM244 350h1v1h-1zM244 351h1v1h-1zM243 352h1v1h-1zM242 353h1v1h-1zM242 354h1v1h-1zM241 355h1v1h-1zM240 356h1v1h-1zM240 357h1v1h-1zM239 358h1v1h-1zM239 359h1v1h-1zM238 360h1v1h-1zM237 361h1v1h-1zM237 362h1v1h-1zM236 363h1v1h-1zM236 364h1v1h-1zM235 365h1v1h-1zM234 366h1v1h-1zM234 367h1v1h-1zM233 368h1v1h-1zM233 369h1v1h-1zM232 370h1v1h-1zM231 371h1v1h-1zM231 372h1v1h-1zM230 373h1v1h-1zM230 374h1v1h-1zM229 375h1v1h-1zM228 376h1v1h-1zM228 377h1v1h-1zM227 378h1v1h-1zM227 379h1v1h-1zM226 380h1v1h-1zM225 381h1v1h-1zM225 382h1v1h-1zM224 383h1v1h-1zM223 384h1v1h-1zM223 385h1v1h-1zM222 386h1v1h-1zM222 387h1v1h-1zM221 388h1v1h-1zM220 389h1v1h-1zM220 390h1v1h-1zM219 391h1v1h-1zM219 392h1v1h-1zM218 393h1v1h-1zM217 394h1v1h-1zM217 395h1v1h-1zM216 396h1v1h-1zM216 397h1v1h-1zM215 398h1v1h-1zM214 399h1v1h-1zM214 400h1v1h-1zM213 401h1v1h-1zM213 402h1v1h-1zM212 403h1v1h-1z"/>
<path fill="#ff0000" d="M301 258h1v1h-1zM300 259h1v1h-1zM299 260h1v1h-1zM299 261h1v1h-1zM298 262h1v1h-1zM297 263h1v1h-1zM297 264h1v1h-1zM296 265h1v1h-1zM296 266h1v1h-1zM295 267h1v1h-1zM294 268h1v1h-1zM294 269h1v1h-1zM293 270h1v1h-1zM293 271h1v1h-1zM292 272h1v1h-1zM291 273h1v1h-1zM291 274h1v1h-1zM290 275h1v1h-1zM290 276h1v1h-1zM289 277h1v1h-1zM288 278h1v1h-1zM288 279h1v1h-1zM287 280h1v1h-1zM287 281h1v1h-1zM286 282h1v1h-1zM285 283h1v1h-1zM285 284h1v1h-1zM284 285h1v1h-1zM284 286h1v1h-1zM283 287h1v1h-1zM282 288h1v1h-1zM282 289h1v1h-1zM281 290h1v1h-1zM280 291h1v1h-1zM280 292h1v1h-1zM279 293h1v1h-1zM279 294h1v1h-1zM278 295h1v1h-1zM277 296h1v1h-1zM277 297h1v1h-1zM276 298h1v1h-1zM276 299h1v1h-1zM275 300h1v1h-1zM274 301h1v1h-1zM274 302h1v1h-1zM273 303h1v1h-1zM273 304h1v1h-1zM272 305h1v1h-1zM271 306h1v1h-1zM271 307h1v1h-1zM270 308h1v1h-1zM270 309h1v1h-1zM269 310h1v1h-1zM268 311h1v1h-1zM268 312h1v1h-1zM267 313h1v1h-1zM267 314h1v1h-1zM266 315h1v1h-1zM265 316h1v1h-1zM265 317h1v1h-1zM264 318h1v1h-1zM263 319h1v1h-1zM263 320h1v1h-1zM262 321h1v1h-1zM262 322h1v1h-1zM261 323h1v1h-1zM260 324h1v1h-1zM260 325h1v1h-1zM259 326h1v1h-1zM259 327h1v1h-1zM258 328h1v1h-1zM257 329h1v1h-1zM257 330h1v1h-1zM256 331h1v1h-1zM256 332h1v1h-1zM255 333h1v1h-1zM254 334h1v1h-1zM254 335h1v1h-1zM253 336h1v1h-1zM253 337h1v1h-1zM252 338h1v1h-1zM251 339h1v1h-1zM251 340h1v1h-1zM250 341h1v1h-1zM250 342h1v1h-1zM249 343h1v1h-1zM248 344h1v1h-1zM248 345h1v1h-1zM247 346h1v1h-1zM246 347h1v1h-1zM246 348h1v1h-1zM245 349h1v1h-1zM245 350h1v1h-1zM244 351h1v1h-1zM243 352h1v1h-1zM243 353h1v1h-1zM242 354h1v1h-1zM242 355h1v1h-1zM241 356h1v1h-1zM240 357h1v1h-1zM240 358h1v1h-1zM239 359h1v1h-1zM239 360h1v1h-1zM238 361h1v1h-1zM237 362h1v1h-1zM237 363h1v1h-1zM236 364h1v1h-1zM236 365h1v1h-1zM235 366h1v1h-1zM234 367h1v1h-1zM234 368h1v1h-1zM233 369h1v1h-1zM233 370h1v1h-1zM232 371h1v1h-1zM231 372h1v1h-1zM231 373h1v1h-1zM230 374h1v1h-1zM229 375h1v1h-1zM229 376h1v1h-1zM228 377h1v1h-1zM228 378h1v1h-1zM227 379h1v1h-1zM226 380h1v1h-1zM226 381h1v1h-1zM225 382h1v1h-1zM225 383h1v1h-1zM224 384h1v1h-1zM223 385h1v1h-1zM223 386h1v1h-1zM222 387h1v1h-1zM222 388h1v1h-1zM221 389h1v1h-1zM220 390h1v1h-1zM220 391h1v1h-1zM219 392h1v1h-1zM219 393h1v1h-1zM218 394h1v1h-1zM217 395h1v1h-1zM217 396h1v1h-1zM216 397h1v1h-1zM216 398h1v1h-1zM215 399h1v1h-1zM214 400h1v1h-1zM214 401h1v1h-1zM213 402h1v1h-1zM213 403h1v1h-1z"/>
<path fill="#000000" d="M305 261h2v1h-2zM305 262h3v1h-3zM305 263h5v1h-5zM306 264h5v1h-5zM307 265h5v1h-5zM309 266h5v1h-5zM310 267h5v1h-5zM311 268h5v1h-5zM313 269h5v1h-5zM314 270h5v1h-5zM315 271h5v1h-5zM317 272h5v1h-5zM318 273h5v1h-5zM319 274h5v1h-5zM321 275h5v1h-5zM322 276h5v1h-5zM323 277h5v1h-5zM325 278h5v1h-5zM326 279h5v1h-5zM327 280h5v1h-5zM329 281h5v1h-5zM330 282h5v1h-5zM331 283h5v1h-5zM333 284h5v1h-5zM334 285h5v1h-5zM335 286h5v1h-5zM337 287h5v1h-5zM338 288h5v1h-5zM339 289h5v1h-5zM341 290h5v1h-5zM342 291h5v1h-5zM343 292h5v1h-5zM345 293h5v1h-5zM346 294h5v1h-5zM347 295h5v1h-5zM349 296h5v1h-5zM350 297h5v1h-5zM351 298h5v1h-5zM353 299h5v1h-5zM354 300h5v1h-5zM355 301h5v1h-5zM357 302h5v1h-5zM358 303h5v1h-5zM359 304h5v1h-5zM361 305h5v1h-5zM362 306h5v1h-5zM363 307h5v1h-5zM365 308h5v1h-5zM366 309h5v1h-5zM367 310h5v1h-5zM369 311h4v1h-4zM370 312h5v1h-5zM371 313h5v1h-5zM372 314h5v1h-5zM374 315h5v1h-5zM375 316h5v1h-5zM376 317h5v1h-5zM378 318h5v1h-5zM379 319h5v1h-5zM380 320h5v1h-5zM382 321h5v1h-5zM383 322h5v1h-5zM384 323h5v1h-5zM386 324h5v1h-5zM387 325h5v1h-5zM388 326h5v1h-5zM390 327h5v1h-5zM391 328h5v1h-5zM392 329h5v1h-5zM394 330h5v1h-5zM395 331h5v1h-5zM396 332h5v1h-5zM398 333h5v1h-5zM399 334h5v1h-5zM400 335h5v1h-5zM402 336h5v1h-5zM403 337h5v1h-5zM404 338h5v1h-5zM406 339h5v1h-5zM407 340h5v1h-5zM408 341h5v1h-5zM410 342h5v1h-5zM411 343h5v1h-5zM412 344h5v1h-5zM414 345h5v1h-5zM415 346h5v1h-5zM416 347h5v1h-5zM418 348h5v1h-5zM419 349h5v1h-5zM420 350h5v1h-5zM422 351h5v1h-5zM423 352h5v1h-5zM424 353h5v1h-5zM426 354h5v1h-5zM427 355h5v1h-5zM428 356h5v1h-5zM430 357h4v1h-4zM431 358h5v1h-5zM432 359h5v1h-5zM433 360h5v1h-5zM435 361h5v1h-5zM436 362h5v1h-5zM437 363h5v1h-5zM439 364h5v1h-5zM440 365h5v1h-5zM441 366h5v1h-5zM443 367h5v1h-5zM444 368h5v1h-5zM445 369h5v1h-5zM447 370h5v1h-5zM448 371h5v1h-5zM449 372h5v1h-5zM451 373h5v1h-5zM452 374h5v1h-5zM453 375h5v1h-5zM455 376h5v1h-5zM456 377h5v1h-5zM457 378h5v1h-5zM459 379h5v1h-5zM460 380h5v1h-5zM461 381h5v1h-5zM463 382h5v1h-5zM464 383h5v1h-5zM465 384h5v1h-5zM467 385h5v1h-5zM468 386h5v1h-5zM469 387h5v1h-5zM471 388h5v1h-5zM472 389h5v1h-5zM473 390h5v1h-5zM475 391h5v1h-5zM476 392h5v1h-5zM477 393h5v1h-5zM479 394h5v1h-5zM480 395h5v1h-5zM481 396h5v1h-5zM483 397h5v1h-5zM484 398h5v1h-5zM485 399h5v1h-5zM487 400h5v1h-5zM488 401h5v1h-5zM489 402h5v1h-5zM491 403h5v1h-5zM492 404h5v1h-5zM493 405h5v1h-5zM495 406h4v1h-4zM496 407h5v1h-5zM497 408h5v1h-5zM498 409h5v1h-5zM500 410h5v1h-5zM501 411h5v1h-5zM502 412h5v1h-5zM504 413h5v1h-5zM505 414h5v1h-5zM506 415h5v1h-5zM508 416h5v1h-5zM509 417h5v1h-5zM510 418h5v1h-5zM512 419h5v1h-5zM513 420h5v1h-5zM514 421h5v1h-5zM516 422h5v1h-5zM517 423h5v1h-5zM518 424h5v1h-5zM520 425h5v1h-5zM521 426h5v1h-5zM522 427h5v1h-5zM524 428h5v1h-5zM525 429h5v1h-5zM526 430h5v1h-5zM528 431h5v1h-5zM529 432h5v1h-5zM530 433h5v1h-5zM532 434h5v1h-5zM533 435h5v1h-5zM534 436h5v1h-5zM536 437h5v1h-5zM537 438h5v1h-5zM538 439h5v1h-5zM540 440h5v1h-5zM541 441h5v1h-5zM542 442h5v1h-5zM544 443h5v1h-5zM545 444h5v1h-5zM546 445h5v1h-5zM548 446h5v1h-5zM549 447h5v1h-5zM550 448h5v1h-5zM552 449h5v1h-5zM553 450h5v1h-5zM554 451h5v1h-5zM556 452h5v1h-5zM557 453h5v1h-5zM558 454h5v1h-5zM560 455h2v1h-2zM561 456h1v1h-1z"/>
<path fill="#0000ff" d="M212 191h1v1h-1zM213 192h2v1h-2zM215 193h1v1h-1zM216 194h2v1h-2zM218 195h1v1h-1zM219 196h2v1h-2zM221 197h2v1h-2zM223 198h2v1h-2zM225 199h2v1h-2zM227 200h2v1h-2zM229 201h2v1h-2zM231 202h2v1h-2zM233 203h2v1h-2zM235 204h2v1h-2zM237 205h1v1h-1zM238 206h2v1h-2zM240 207h1v1h-1zM241 208h2v1h-2zM243 209h1v1h-1zM244 210h2v1h-2zM246 211h2v1h-2zM248 212h1v1h-1zM249 213h2v1h-2zM251 214h1v1h-1zM252 215h2v1h-2zM254 216h1v1h-1zM255 217h2v1h-2zM257 218h1v1h-1zM258 219h1v1h-1zM259 220h2v1h-2zM261 221h1v1h-1zM262 222h1v1h-1zM263 223h2v1h-2zM265 224h1v1h-1zM266 225h1v1h-1zM267 226h2v1h-2zM269 227h1v1h-1zM270 228h2v1h-2zM272 229h1v1h-1zM273 230h2v1h-2zM275 231h1v1h-1zM276 232h2v1h-2zM278 233h1v1h-1zM279 234h2v1h-2zM281 235h1v1h-1zM282 236h2v1h-2zM284 237h1v1h-1zM285 238h2v1h-2zM287 239h1v1h-1zM288 240h2v1h-2zM290 241h1v1h-1zM291 242h2v1h-2zM293 243h1v1h-1zM294 244h1v1h-1zM295 245h2v1h-2zM297 246h1v1h-1zM298 247h2v1h-2zM300 248h1v1h-1zM301 249h2v1h-2zM303 250h2v1h-2zM305 251h1v1h-1zM306 252h2v1h-2zM308 253h1v1h-1zM309 254h1v1h-1zM310 255h2v1h-2zM312 256h1v1h-1zM313 257h1v1h-1zM314 258h2v1h-2zM316 259h1v1h-1zM317 260h1v1h-1zM318 261h1v1h-1zM319 262h2v1h-2zM321 263h1v1h-1zM322 264h1v1h-1zM323 265h1v1h-1zM324 266h1v1h-1zM325 267h1v1h-1zM326 268h1v1h-1zM327 269h2v1h-2zM329 270h1v1h-1zM330 271h1v1h-1zM331 272h1v1h-1zM332 273h1v1h-1zM333 274h1v1h-1zM334 275h2v1h-2zM336 276h1v1h-1zM337 277h1v1h-1zM338 278h1v1h-1zM339 279h1v1h-1zM340 280h2v1h-2zM342 281h1v1h-1zM343 282h1v1h-1zM344 283h1v1h-1zM345 284h1v1h-1zM346 285h2v1h-2zM348 286h1v1h-1zM349 287h1v1h-1zM350 288h1v1h-1zM351 289h1v1h-1zM352 290h1v1h-1zM353 291h1v1h-1zM354 292h1v1h-1zM355 293h1v1h-1zM356 294h1v1h-1zM356 295h1v1h-1zM357 296h1v1h-1zM358 297h1v1h-1zM359 298h1v1h-1zM360 299h1v1h-1zM361 300h1v1h-1zM362 301h1v1h-1zM363 302h1v1h-1zM364 303h2v1h-2zM366 304h1v1h-1zM367 305h1v1h-1zM368 306h1v1h-1zM369 307h1v1h-1zM370 308h2v1h-2zM372 309h1v1h-1zM373 310h1v1h-1zM374 311h1v1h-1zM375 312h2v1h-2zM377 313h1v1h-1zM378 314h1v1h-1zM379 315h1v1h-1zM380 316h1v1h-1zM381 317h1v1h-1zM382 318h1v1h-1zM383 319h1v1h-1zM384 320h1v1h-1zM385 321h1v1h-1zM386 322h1v1h-1zM387 323h1v1h-1zM388 324h1v1h-1zM389 325h1v1h-1zM390 326h1v1h-1zM391 327h2v1h-2zM393 328h2v1h-2zM395 329h1v1h-1zM396 330h2v1h-2zM398 331h2v1h-2zM400 332h2v1h-2zM402 333h2v1h-2zM404 334h2v1h-2zM406 335h2v1h-2zM408 336h3v1h-3zM411 337h2v1h-2zM413 338h2v1h-2zM415 339h2v1h-2zM417 340h1v1h-1zM418 341h2v1h-2zM420 342h1v1h-1zM421 343h1v1h-1zM422 344h2v1h-2zM424 345h1v1h-1zM425 346h1v1h-1zM426 347h2v1h-2zM428 348h1v1h-1zM429 349h1v1h-1zM430 350h2v1h-2zM432 351h1v1h-1zM433 352h2v1h-2zM435 353h2v1h-2zM437 354h1v1h-1zM438 355h2v1h-2zM440 356h1v1h-1zM441 357h2v1h-2zM443 358h2v1h-2zM445 359h1v1h-1zM446 360h2v1h-2zM448 361h1v1h-1zM449 362h2v1h-2zM451 363h1v1h-1zM452 364h1v1h-1zM453 365h2v1h-2zM455 366h1v1h-1zM456 367h2v1h-2zM458 368h1v1h-1zM459 369h2v1h-2zM461 370h1v1h-1zM462 371h1v1h-1zM463 372h2v1h-2zM465 373h1v1h-1zM466 374h2v1h-2zM468 375h1v1h-1zM469 376h1v1h-1zM470 377h2v1h-2zM472 378h1v1h-1zM473 379h1v1h-1zM474 380h2v1h-2zM476 381h1v1h-1zM477 382h1v1h-1zM478 383h2v1h-2zM480 384h1v1h-1zM481 385h1v1h-1zM482 386h2v1h-2zM484 387h1v1h-1zM485 388h1v1h-1zM486 389h1v1h-1zM487 390h2v1h-2zM489 391h1v1h-1zM490 392h1v1h-1zM491 393h2v1h-2zM493 394h1v1h-1zM494 395h1v1h-1zM495 396h1v1h-1zM496 397h2v1h-2zM498 398h1v1h-1zM499 399h1v1h-1zM500 400h2v1h-2zM502 401h1v1h-1zM503 402h1v1h-1zM504 403h2v1h-2zM506 404h1v1h-1zM507 405h1v1h-1zM508 406h2v1h-2zM510 407h1v1h-1zM511 408h1v1h-1zM512 409h2v1h-2zM514 410h1v1h-1zM515 411h1v1h-1zM516 412h1v1h-1zM517 413h1v1h-1zM518 414h2v1h-2zM520 415h1v1h-1zM521 416h1v1h-1zM522 417h1v1h-1zM523 418h1v1h-1zM524 419h1v1h-1zM525 420h1v1h-1zM526 421h2v1h-2zM528 422h1v1h-1zM529 423h1v1h-1zM530 424h1v1h-1zM531 425h1v1h-1zM532 426h1v1h-1zM533 427h2v1h-2zM535 428h1v1h-1zM536 429h1v1h-1zM537 430h1v1h-1zM538 431h1v1h-1zM539 432h1v1h-1zM540 433h1v1h-1zM541 434h1v1h-1zM542 435h1v1h-1zM543 436h1v1h-1zM544 437h1v1h-1zM545 438h1v1h-1zM546 439h1v1h-1zM547 440h1v1h-1zM548 441h1v1h-1zM549 442h1v1h-1zM550 443h1v1h-1zM551 444h1v1h-1zM552 445h1v1h-1zM553 446h1v1h-1zM554 447h1v1h-1zM555 448h1v1h-1zM556 449h1v1h-1zM556 450h1v1h-1zM557 451h1v1h-1zM558 452h1v1h-1zM559 453h1v1h-1zM560 454h1v1h-1zM561 455h1v1h-1z"/>
<path fill="#0000ff" d="M215 402h3v1h-3zM213 403h4v1h-4zM212 404h3v1h-3zM212 405h1v1h-1z"/>
<path fill="#ff0000" d="M300 255h4v1h-4zM299 256h1v1h-1zM304 256h1v1h-1zM298 257h1v1h-1zM305 257h1v1h-1zM298 258h4v1h-4zM305 258h1v1h-1zM298 259h2v1h-2zM305 259h1v1h-1zM298 260h2v1h-2zM305 260h1v1h-1zM299 261h1v1h-1zM304 261h1v1h-1zM300 262h4v1h-4z"/>
</svg>
</div>
<svg class="a" style="left:0;top:0" width="30" height="160"><path fill="#ff0000" d="M13 127h1v1h-1zM14 127h1v1h-1zM15 127h1v1h-1zM12 128h1v1h-1zM16 128h1v1h-1zM11 129h1v1h-1zM17 129h1v1h-1zM11 130h1v1h-1zM17 130h1v1h-1zM11 131h1v1h-1zM17 131h1v1h-1zM12 132h1v1h-1zM16 132h1v1h-1zM13 133h1v1h-1zM14 133h1v1h-1zM15 133h1v1h-1zM11 145h1v1h-1zM17 145h1v1h-1zM12 146h1v1h-1zM16 146h1v1h-1zM13 147h1v1h-1zM15 147h1v1h-1zM14 148h1v1h-1zM15 149h1v1h-1zM13 149h1v1h-1zM16 150h1v1h-1zM12 150h1v1h-1zM17 151h1v1h-1zM11 151h1v1h-1z"/></svg>
<div class="it" style="left:24px;top:125px">Источник</div>
<div class="it" style="left:24px;top:142px">Нагрузка</div>

<!-- info panel -->
<div class="a" style="left:622px;top:350px;width:147px;height:180px;border-left:1px solid #808080;border-top:1px solid #808080"></div>
<div class="it" style="left:634.3px;top:358px">Провод No.3</div>
<div class="it" style="left:630.2px;top:373px">X1</div>
<div class="it" style="left:657.4px;top:373px">:</div>
<div class="it" style="left:669.7px;top:373px">4.75 m</div>
<div class="it" style="left:630.2px;top:388px">Y1</div>
<div class="it" style="left:657.4px;top:388px">:</div>
<div class="it" style="left:670.2px;top:388px">0.0 m</div>
<div class="it" style="left:630.1px;top:403px">Z1</div>
<div class="it" style="left:656.3px;top:403px">:</div>
<div class="it" style="left:668.7px;top:403px">8.373 m</div>
<div class="it" style="left:630.2px;top:418px">X2</div>
<div class="it" style="left:657.4px;top:418px">:</div>
<div class="it" style="left:670.4px;top:418px">18.106 m</div>
<div class="it" style="left:630.2px;top:433px">Y2</div>
<div class="it" style="left:657.4px;top:433px">:</div>
<div class="it" style="left:670.2px;top:433px">0.0 m</div>
<div class="it" style="left:629.7px;top:448px">Z2</div>
<div class="it" style="left:656.2px;top:448px">:</div>
<div class="it" style="left:668.6px;top:448px">0.9 m</div>
<div class="it" style="left:629.5px;top:463px">R</div>
<div class="it" style="left:654.7px;top:463px">:</div>
<div class="it" style="left:666.4px;top:463px">0.75 mm</div>
<div class="it" style="left:634px;top:478px">Длина</div>
<div class="it" style="left:679.4px;top:478px">:</div>
<div class="it" style="left:691.6px;top:478px">15.305 m</div>
<div class="it" style="left:634px;top:493px">Азим.</div>
<div class="it" style="left:680.4px;top:493px">:</div>
<div class="it" style="left:692.9px;top:493px">0.0 гр.</div>
<div class="it" style="left:634.2px;top:508px">Зенит.:</div>
<div class="it" style="left:684.7px;top:508px">-29.2 гр.</div>

<!-- bottom controls -->
<div class="t" style="left:53px;top:532px">Масштаб токов</div>
<div class="a" style="left:22px;top:557px;width:132px;height:2px;background:#808080;border-top:1px solid #404040"></div>
<div class="a" style="left:22px;top:559px;width:132px;height:2px;background:#fff"></div>
<svg class="a" style="left:57px;top:549px" width="13" height="22" viewBox="0 0 13 22">
 <path d="M1.5 1.5 H11.5 V15.5 L6.5 20 L1.5 15.5 Z" fill="#d4d0c8"/>
 <path d="M1.5 15.5 V1.5 H11" fill="none" stroke="#fff" stroke-width="1"/>
 <path d="M11.5 1 V15.5 L6.5 20.3" fill="none" stroke="#404040" stroke-width="1.4"/>
 <path d="M1.5 15.5 L6 19.8" fill="none" stroke="#fff" stroke-width="1"/>
</svg>
<svg class="a" style="left:185px;top:532px" width="13" height="13"><path fill="#808080" d="M0 0h1v1h-1zM0 1h1v1h-1zM0 2h1v1h-1zM0 3h1v1h-1zM0 4h1v1h-1zM0 5h1v1h-1zM0 6h1v1h-1zM0 7h1v1h-1zM0 8h1v1h-1zM0 9h1v1h-1zM0 10h1v1h-1zM0 11h1v1h-1zM1 0h1v1h-1zM2 0h1v1h-1zM3 0h1v1h-1zM4 0h1v1h-1zM5 0h1v1h-1zM6 0h1v1h-1zM7 0h1v1h-1zM8 0h1v1h-1zM9 0h1v1h-1zM10 0h1v1h-1zM11 0h1v1h-1z"/><path fill="#ffffff" d="M0 12h1v1h-1zM1 12h1v1h-1zM2 2h1v1h-1zM2 3h1v1h-1zM2 4h1v1h-1zM2 5h1v1h-1zM2 6h1v1h-1zM2 7h1v1h-1zM2 8h1v1h-1zM2 9h1v1h-1zM2 10h1v1h-1zM2 12h1v1h-1zM3 2h1v1h-1zM3 3h1v1h-1zM3 4h1v1h-1zM3 8h1v1h-1zM3 9h1v1h-1zM3 10h1v1h-1zM3 12h1v1h-1zM4 2h1v1h-1zM4 3h1v1h-1zM4 4h1v1h-1zM4 5h1v1h-1zM4 9h1v1h-1zM4 10h1v1h-1zM4 12h1v1h-1zM5 2h1v1h-1zM5 3h1v1h-1zM5 4h1v1h-1zM5 5h1v1h-1zM5 6h1v1h-1zM5 10h1v1h-1zM5 12h1v1h-1zM6 2h1v1h-1zM6 3h1v1h-1zM6 4h1v1h-1zM6 5h1v1h-1zM6 9h1v1h-1zM6 10h1v1h-1zM6 12h1v1h-1zM7 2h1v1h-1zM7 3h1v1h-1zM7 4h1v1h-1zM7 8h1v1h-1zM7 9h1v1h-1zM7 10h1v1h-1zM7 12h1v1h-1zM8 2h1v1h-1zM8 3h1v1h-1zM8 7h1v1h-1zM8 8h1v1h-1zM8 9h1v1h-1zM8 10h1v1h-1zM8 12h1v1h-1zM9 2h1v1h-1zM9 6h1v1h-1zM9 7h1v1h-1zM9 8h1v1h-1zM9 9h1v1h-1zM9 10h1v1h-1zM9 12h1v1h-1zM10 2h1v1h-1zM10 3h1v1h-1zM10 4h1v1h-1zM10 5h1v1h-1zM10 6h1v1h-1zM10 7h1v1h-1zM10 8h1v1h-1zM10 9h1v1h-1zM10 10h1v1h-1zM10 12h1v1h-1zM11 12h1v1h-1zM12 0h1v1h-1zM12 1h1v1h-1zM12 2h1v1h-1zM12 3h1v1h-1zM12 4h1v1h-1zM12 5h1v1h-1zM12 6h1v1h-1zM12 7h1v1h-1zM12 8h1v1h-1zM12 9h1v1h-1zM12 10h1v1h-1zM12 11h1v1h-1zM12 12h1v1h-1z"/><path fill="#404040" d="M1 1h1v1h-1zM1 2h1v1h-1zM1 3h1v1h-1zM1 4h1v1h-1zM1 5h1v1h-1zM1 6h1v1h-1zM1 7h1v1h-1zM1 8h1v1h-1zM1 9h1v1h-1zM1 10h1v1h-1zM2 1h1v1h-1zM3 1h1v1h-1zM4 1h1v1h-1zM5 1h1v1h-1zM6 1h1v1h-1zM7 1h1v1h-1zM8 1h1v1h-1zM9 1h1v1h-1zM10 1h1v1h-1z"/><path fill="#d4d0c8" d="M1 11h1v1h-1zM2 11h1v1h-1zM3 11h1v1h-1zM4 11h1v1h-1zM5 11h1v1h-1zM6 11h1v1h-1zM7 11h1v1h-1zM8 11h1v1h-1zM9 11h1v1h-1zM10 11h1v1h-1zM11 1h1v1h-1zM11 2h1v1h-1zM11 3h1v1h-1zM11 4h1v1h-1zM11 5h1v1h-1zM11 6h1v1h-1zM11 7h1v1h-1zM11 8h1v1h-1zM11 9h1v1h-1zM11 10h1v1h-1zM11 11h1v1h-1z"/><path fill="#000000" d="M9 3h1v1h-1zM8 4h1v1h-1zM9 4h1v1h-1zM3 5h1v1h-1zM7 5h1v1h-1zM8 5h1v1h-1zM9 5h1v1h-1zM3 6h1v1h-1zM4 6h1v1h-1zM6 6h1v1h-1zM7 6h1v1h-1zM8 6h1v1h-1zM3 7h1v1h-1zM4 7h1v1h-1zM5 7h1v1h-1zM6 7h1v1h-1zM7 7h1v1h-1zM4 8h1v1h-1zM5 8h1v1h-1zM6 8h1v1h-1zM5 9h1v1h-1z"/></svg>
<div class="t" style="left:206px;top:533px">Ток</div>
<svg class="a" style="left:185px;top:552px" width="13" height="13"><path fill="#808080" d="M0 0h1v1h-1zM0 1h1v1h-1zM0 2h1v1h-1zM0 3h1v1h-1zM0 4h1v1h-1zM0 5h1v1h-1zM0 6h1v1h-1zM0 7h1v1h-1zM0 8h1v1h-1zM0 9h1v1h-1zM0 10h1v1h-1zM0 11h1v1h-1zM1 0h1v1h-1zM2 0h1v1h-1zM3 0h1v1h-1zM4 0h1v1h-1zM5 0h1v1h-1zM6 0h1v1h-1zM7 0h1v1h-1zM8 0h1v1h-1zM9 0h1v1h-1zM10 0h1v1h-1zM11 0h1v1h-1z"/><path fill="#ffffff" d="M0 12h1v1h-1zM1 12h1v1h-1zM2 2h1v1h-1zM2 3h1v1h-1zM2 4h1v1h-1zM2 5h1v1h-1zM2 6h1v1h-1zM2 7h1v1h-1zM2 8h1v1h-1zM2 9h1v1h-1zM2 10h1v1h-1zM2 12h1v1h-1zM3 2h1v1h-1zM3 3h1v1h-1zM3 4h1v1h-1zM3 5h1v1h-1zM3 6h1v1h-1zM3 7h1v1h-1zM3 8h1v1h-1zM3 9h1v1h-1zM3 10h1v1h-1zM3 12h1v1h-1zM4 2h1v1h-1zM4 3h1v1h-1zM4 4h1v1h-1zM4 5h1v1h-1zM4 6h1v1h-1zM4 7h1v1h-1zM4 8h1v1h-1zM4 9h1v1h-1zM4 10h1v1h-1zM4 12h1v1h-1zM5 2h1v1h-1zM5 3h1v1h-1zM5 4h1v1h-1zM5 5h1v1h-1zM5 6h1v1h-1zM5 7h1v1h-1zM5 8h1v1h-1zM5 9h1v1h-1zM5 10h1v1h-1zM5 12h1v1h-1zM6 2h1v1h-1zM6 3h1v1h-1zM6 4h1v1h-1zM6 5h1v1h-1zM6 6h1v1h-1zM6 7h1v1h-1zM6 8h1v1h-1zM6 9h1v1h-1zM6 10h1v1h-1zM6 12h1v1h-1zM7 2h1v1h-1zM7 3h1v1h-1zM7 4h1v1h-1zM7 5h1v1h-1zM7 6h1v1h-1zM7 7h1v1h-1zM7 8h1v1h-1zM7 9h1v1h-1zM7 10h1v1h-1zM7 12h1v1h-1zM8 2h1v1h-1zM8 3h1v1h-1zM8 4h1v1h-1zM8 5h1v1h-1zM8 6h1v1h-1zM8 7h1v1h-1zM8 8h1v1h-1zM8 9h1v1h-1zM8 10h1v1h-1zM8 12h1v1h-1zM9 2h1v1h-1zM9 3h1v1h-1zM9 4h1v1h-1zM9 5h1v1h-1zM9 6h1v1h-1zM9 7h1v1h-1zM9 8h1v1h-1zM9 9h1v1h-1zM9 10h1v1h-1zM9 12h1v1h-1zM10 2h1v1h-1zM10 3h1v1h-1zM10 4h1v1h-1zM10 5h1v1h-1zM10 6h1v1h-1zM10 7h1v1h-1zM10 8h1v1h-1zM10 9h1v1h-1zM10 10h1v1h-1zM10 12h1v1h-1zM11 12h1v1h-1zM12 0h1v1h-1zM12 1h1v1h-1zM12 2h1v1h-1zM12 3h1v1h-1zM12 4h1v1h-1zM12 5h1v1h-1zM12 6h1v1h-1zM12 7h1v1h-1zM12 8h1v1h-1zM12 9h1v1h-1zM12 10h1v1h-1zM12 11h1v1h-1zM12 12h1v1h-1z"/><path fill="#404040" d="M1 1h1v1h-1zM1 2h1v1h-1zM1 3h1v1h-1zM1 4h1v1h-1zM1 5h1v1h-1zM1 6h1v1h-1zM1 7h1v1h-1zM1 8h1v1h-1zM1 9h1v1h-1zM1 10h1v1h-1zM2 1h1v1h-1zM3 1h1v1h-1zM4 1h1v1h-1zM5 1h1v1h-1zM6 1h1v1h-1zM7 1h1v1h-1zM8 1h1v1h-1zM9 1h1v1h-1zM10 1h1v1h-1z"/><path fill="#d4d0c8" d="M1 11h1v1h-1zM2 11h1v1h-1zM3 11h1v1h-1zM4 11h1v1h-1zM5 11h1v1h-1zM6 11h1v1h-1zM7 11h1v1h-1zM8 11h1v1h-1zM9 11h1v1h-1zM10 11h1v1h-1zM11 1h1v1h-1zM11 2h1v1h-1zM11 3h1v1h-1zM11 4h1v1h-1zM11 5h1v1h-1zM11 6h1v1h-1zM11 7h1v1h-1zM11 8h1v1h-1zM11 9h1v1h-1zM11 10h1v1h-1zM11 11h1v1h-1z"/></svg>
<div class="t" style="left:206px;top:553px">Сегменты</div>

<div class="t" style="left:348px;top:532px">Масштаб</div>
<div class="a" style="left:305px;top:557px;width:132px;height:2px;background:#808080;border-top:1px solid #404040"></div>
<div class="a" style="left:305px;top:559px;width:132px;height:2px;background:#fff"></div>
<svg class="a" style="left:368px;top:549px" width="13" height="22" viewBox="0 0 13 22">
 <path d="M1.5 1.5 H11.5 V15.5 L6.5 20 L1.5 15.5 Z" fill="#d4d0c8"/>
 <path d="M1.5 15.5 V1.5 H11" fill="none" stroke="#fff" stroke-width="1"/>
 <path d="M11.5 1 V15.5 L6.5 20.3" fill="none" stroke="#404040" stroke-width="1.4"/>
 <path d="M1.5 15.5 L6 19.8" fill="none" stroke="#fff" stroke-width="1"/>
</svg>

<div class="t" style="left:487px;top:546px">Выбор провода</div>
<div class="a" style="left:583px;top:541px;width:50px;height:24px;background:#fff;box-shadow:inset 1px 1px #808080,inset 2px 2px #404040,inset -1px -1px #fff,inset -2px -2px #d4d0c8"></div>
<div class="t" style="left:586px;top:545px">3</div>
<div class="a" style="left:633px;top:541px;width:16px;height:12px;background:#d4d0c8;box-shadow:inset -1px -1px #404040,inset 1px 1px #d4d0c8,inset -2px -2px #808080,inset 2px 2px #fff"></div>
<div class="a" style="left:633px;top:553px;width:16px;height:12px;background:#d4d0c8;box-shadow:inset -1px -1px #404040,inset 1px 1px #d4d0c8,inset -2px -2px #808080,inset 2px 2px #fff"></div>
<svg class="a" style="left:633px;top:541px" width="16" height="24"><path d="M7 4h1v1h-1zM6 5h3v1h-3zM5 6h5v1h-5zM5 16h5v1h-5zM6 17h3v1h-3zM7 18h1v1h-1z" fill="#000"/></svg>
<svg class="a" style="left:657px;top:545px" width="13" height="13"><path fill="#808080" d="M0 0h1v1h-1zM0 1h1v1h-1zM0 2h1v1h-1zM0 3h1v1h-1zM0 4h1v1h-1zM0 5h1v1h-1zM0 6h1v1h-1zM0 7h1v1h-1zM0 8h1v1h-1zM0 9h1v1h-1zM0 10h1v1h-1zM0 11h1v1h-1zM1 0h1v1h-1zM2 0h1v1h-1zM3 0h1v1h-1zM4 0h1v1h-1zM5 0h1v1h-1zM6 0h1v1h-1zM7 0h1v1h-1zM8 0h1v1h-1zM9 0h1v1h-1zM10 0h1v1h-1zM11 0h1v1h-1z"/><path fill="#ffffff" d="M0 12h1v1h-1zM1 12h1v1h-1zM2 2h1v1h-1zM2 3h1v1h-1zM2 4h1v1h-1zM2 5h1v1h-1zM2 6h1v1h-1zM2 7h1v1h-1zM2 8h1v1h-1zM2 9h1v1h-1zM2 10h1v1h-1zM2 12h1v1h-1zM3 2h1v1h-1zM3 3h1v1h-1zM3 4h1v1h-1zM3 5h1v1h-1zM3 6h1v1h-1zM3 7h1v1h-1zM3 8h1v1h-1zM3 9h1v1h-1zM3 10h1v1h-1zM3 12h1v1h-1zM4 2h1v1h-1zM4 3h1v1h-1zM4 4h1v1h-1zM4 5h1v1h-1zM4 6h1v1h-1zM4 7h1v1h-1zM4 8h1v1h-1zM4 9h1v1h-1zM4 10h1v1h-1zM4 12h1v1h-1zM5 2h1v1h-1zM5 3h1v1h-1zM5 4h1v1h-1zM5 5h1v1h-1zM5 6h1v1h-1zM5 7h1v1h-1zM5 8h1v1h-1zM5 9h1v1h-1zM5 10h1v1h-1zM5 12h1v1h-1zM6 2h1v1h-1zM6 3h1v1h-1zM6 4h1v1h-1zM6 5h1v1h-1zM6 6h1v1h-1zM6 7h1v1h-1zM6 8h1v1h-1zM6 9h1v1h-1zM6 10h1v1h-1zM6 12h1v1h-1zM7 2h1v1h-1zM7 3h1v1h-1zM7 4h1v1h-1zM7 5h1v1h-1zM7 6h1v1h-1zM7 7h1v1h-1zM7 8h1v1h-1zM7 9h1v1h-1zM7 10h1v1h-1zM7 12h1v1h-1zM8 2h1v1h-1zM8 3h1v1h-1zM8 4h1v1h-1zM8 5h1v1h-1zM8 6h1v1h-1zM8 7h1v1h-1zM8 8h1v1h-1zM8 9h1v1h-1zM8 10h1v1h-1zM8 12h1v1h-1zM9 2h1v1h-1zM9 3h1v1h-1zM9 4h1v1h-1zM9 5h1v1h-1zM9 6h1v1h-1zM9 7h1v1h-1zM9 8h1v1h-1zM9 9h1v1h-1zM9 10h1v1h-1zM9 12h1v1h-1zM10 2h1v1h-1zM10 3h1v1h-1zM10 4h1v1h-1zM10 5h1v1h-1zM10 6h1v1h-1zM10 7h1v1h-1zM10 8h1v1h-1zM10 9h1v1h-1zM10 10h1v1h-1zM10 12h1v1h-1zM11 12h1v1h-1zM12 0h1v1h-1zM12 1h1v1h-1zM12 2h1v1h-1zM12 3h1v1h-1zM12 4h1v1h-1zM12 5h1v1h-1zM12 6h1v1h-1zM12 7h1v1h-1zM12 8h1v1h-1zM12 9h1v1h-1zM12 10h1v1h-1zM12 11h1v1h-1zM12 12h1v1h-1z"/><path fill="#404040" d="M1 1h1v1h-1zM1 2h1v1h-1zM1 3h1v1h-1zM1 4h1v1h-1zM1 5h1v1h-1zM1 6h1v1h-1zM1 7h1v1h-1zM1 8h1v1h-1zM1 9h1v1h-1zM1 10h1v1h-1zM2 1h1v1h-1zM3 1h1v1h-1zM4 1h1v1h-1zM5 1h1v1h-1zM6 1h1v1h-1zM7 1h1v1h-1zM8 1h1v1h-1zM9 1h1v1h-1zM10 1h1v1h-1z"/><path fill="#d4d0c8" d="M1 11h1v1h-1zM2 11h1v1h-1zM3 11h1v1h-1zM4 11h1v1h-1zM5 11h1v1h-1zM6 11h1v1h-1zM7 11h1v1h-1zM8 11h1v1h-1zM9 11h1v1h-1zM10 11h1v1h-1zM11 1h1v1h-1zM11 2h1v1h-1zM11 3h1v1h-1zM11 4h1v1h-1zM11 5h1v1h-1zM11 6h1v1h-1zM11 7h1v1h-1zM11 8h1v1h-1zM11 9h1v1h-1zM11 10h1v1h-1zM11 11h1v1h-1z"/></svg>
<div class="a" style="left:678px;top:547px;width:89px;height:14px;overflow:hidden"><div class="t" style="left:0;top:0">Толстые линии</div></div>


</body></html>
